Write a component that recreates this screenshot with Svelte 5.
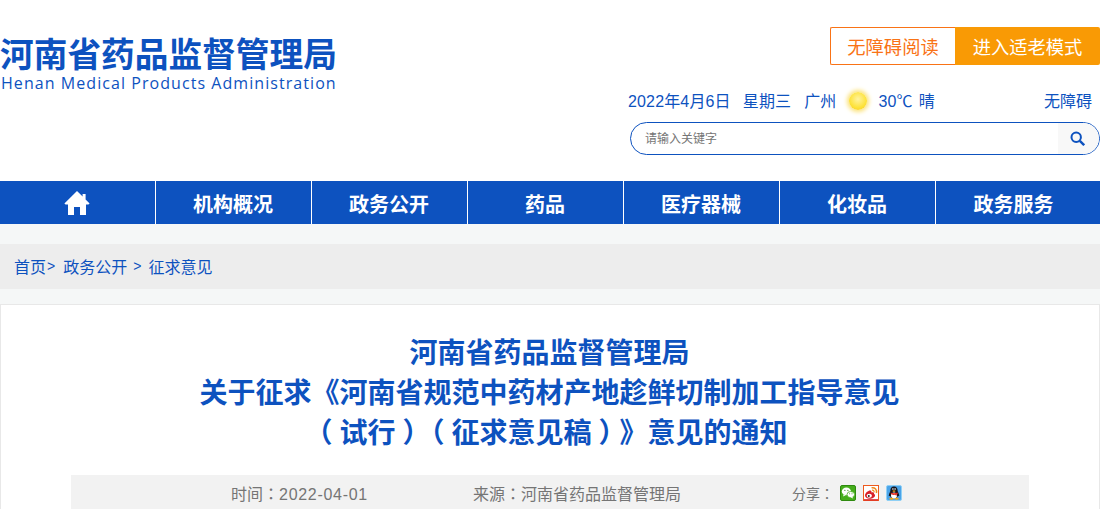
<script>
  const nav = ['机构概况', '政务公开', '药品', '医疗器械', '化妆品', '政务服务'];
</script>

<div class="page">
  <header class="header">
    <div class="logo">
      <div class="logo-cn">河南省药品监督管理局</div>
      <div class="logo-en">Henan Medical Products Administration</div>
    </div>
    <div class="tools">
      <div class="btns">
        <a class="btn-outline">无障碍阅读</a>
        <a class="btn-solid">进入适老模式</a>
      </div>
      <div class="info">
        <div class="date">
          <span>2022年4月6日</span>
          <span class="week">星期三</span>
          <span class="city">广州</span>
          <span class="sun"></span>
          <span class="temp">30℃</span>
          <span class="sky">晴</span>
        </div>
        <span class="access">无障碍</span>
      </div>
      <div class="search">
        <span class="placeholder">请输入关键字</span>
        <span class="search-btn">
          <svg width="15" height="15" viewBox="0 0 15 15" fill="none" stroke="#0d52bf">
            <circle cx="6.2" cy="6.2" r="4.7" stroke-width="2"/>
            <path d="M9.8 9.8L14.2 14.2" stroke-width="2.4"/>
          </svg>
        </span>
      </div>
    </div>
  </header>

  <nav class="nav">
    <a class="item">
      <svg width="26" height="24" viewBox="0 0 26 24" fill="#fff">
        <path d="M13 0L0.4 12.4L1.6 13.6H4V24H10V16H16V24H22V13.6H24.4L25.6 12.4L21.6 8.4V3H18.6V5.5Z"/>
      </svg>
    </a>
    {#each nav as n}
      <a class="item">{n}</a>
    {/each}
  </nav>

  <div class="crumb">
    <span>首页</span><span class="sep">&gt;</span><span class="c2">政务公开</span><span class="sep s2">&gt;</span><span>征求意见</span>
  </div>

  <main class="card">
    <h1 class="title">河南省药品监督管理局<br />关于征求《河南省规范中药材产地趁鲜切制加工指导意见<br /><span class="paren">（</span>试行<span class="paren">）</span><span class="paren">（</span>征求意见稿<span class="paren">）</span>》意见的通知</h1>
    <div class="meta">
      <span class="m-time">时间<span class="colon">：</span><span class="num">2022-04-01</span></span>
      <span class="m-src">来源<span class="colon">：</span>河南省药品监督管理局</span>
      <div class="share">
        <span class="share-label">分享<span class="colon">：</span></span>
        <svg class="ic" width="16" height="16" viewBox="0 0 16 16">
          <rect x="0.5" y="0.5" width="15" height="15" rx="1.5" fill="#45ad1b" stroke="#2f8a10"/>
          <ellipse cx="6.4" cy="6.4" rx="4.6" ry="3.8" fill="#fff"/>
          <path d="M3.6 9L3.2 11.4L6 9.9Z" fill="#fff"/>
          <circle cx="4.9" cy="5.3" r="0.6" fill="#2f8a10"/>
          <circle cx="7.9" cy="5.3" r="0.6" fill="#2f8a10"/>
          <ellipse cx="10.8" cy="9.6" rx="3.8" ry="3.1" fill="#fff" stroke="#45ad1b" stroke-width="0.8"/>
          <path d="M12.2 11.8L13.2 13.6L10.6 12.6Z" fill="#fff"/>
          <circle cx="9.6" cy="8.8" r="0.5" fill="#2f8a10"/>
          <circle cx="12" cy="8.8" r="0.5" fill="#2f8a10"/>
        </svg>
        <svg class="ic" width="16" height="16" viewBox="0 0 16 16">
          <rect x="0.5" y="0.5" width="15" height="15" fill="#fff" stroke="#ee5a1e"/>
          <rect x="1" y="14.2" width="14" height="1.3" fill="#d8202a"/>
          <path d="M2 10.6C2 8 5.4 5.4 7.4 5.6C8.6 5.8 8.6 7 8.4 7.6C10 7 11.4 7.6 11 9C12 9.4 12 10 12 10.6C12 12.4 9.4 13.8 6.8 13.8C4 13.8 2 12.6 2 10.6Z" fill="#d8202a"/>
          <ellipse cx="6.3" cy="10.7" rx="2.6" ry="2" fill="#fff"/>
          <circle cx="5.8" cy="10.9" r="1" fill="#222"/>
          <path d="M8.6 2.8C12 2.2 14.2 4.6 13.4 8" fill="none" stroke="#f08a1d" stroke-width="1.5"/>
          <path d="M9 5.2C10.4 5 11.4 6 11 7.4" fill="none" stroke="#f08a1d" stroke-width="1.2"/>
        </svg>
        <svg class="ic" width="16" height="16" viewBox="0 0 16 16">
          <rect x="0.5" y="0.5" width="15" height="15" rx="1.5" fill="#4aa3e8" stroke="#8fd0f5"/>
          <path d="M8 1.6C5.4 1.6 4.4 3.6 4.4 5.6C4.4 6.6 3.2 8.4 2.8 10.2C2.6 11.4 3.4 11.6 4 10.8C4.6 12.4 5.4 13 5.4 13H10.6C10.6 13 11.4 12.4 12 10.8C12.6 11.6 13.4 11.4 13.2 10.2C12.8 8.4 11.6 6.6 11.6 5.6C11.6 3.6 10.6 1.6 8 1.6Z" fill="#14141c"/>
          <ellipse cx="8" cy="10.4" rx="3" ry="3" fill="#fff"/>
          <path d="M4.4 7.6C6.5 8.6 9.5 8.6 11.6 7.6L11.8 9C10.8 9.4 10.6 9.5 10.4 11L9.2 9.8C8 10 6.8 9.9 5.6 9.6Z" fill="#e0281e"/>
          <path d="M6.2 6L8 5.2L9.8 6L8 7.1Z" fill="#f3a81c"/>
          <circle cx="6.9" cy="4" r="0.8" fill="#fff"/>
          <circle cx="9.1" cy="4" r="0.8" fill="#fff"/>
          <ellipse cx="5.4" cy="13.8" rx="2.2" ry="1" fill="#f3a81c"/>
          <ellipse cx="10.6" cy="13.8" rx="2.2" ry="1" fill="#f3a81c"/>
        </svg>
      </div>
    </div>
  </main>
</div>

<style>
  :global(body) {
    margin: 0;
    background: #f5f7f7;
    overflow: hidden;
  }
  .page {
    width: 1100px;
    height: 509px;
    overflow: hidden;
    font-family: "Liberation Sans", "Noto Sans CJK SC", sans-serif;
    color: #0d52bf;
  }
  .header {
    height: 181px;
    background: #fff;
    display: flex;
    justify-content: space-between;
    box-sizing: border-box;
  }
  .logo {
    padding-top: 37px;
  }
  .logo-cn {
    font-size: 33.7px;
    line-height: 37px;
    font-weight: 700;
    white-space: nowrap;
  }
  .logo-en {
    font-size: 16px;
    line-height: 18px;
    letter-spacing: 1.06px;
    padding-left: 1px;
    font-family: "Open Sans", sans-serif;
    white-space: nowrap;
  }
  .tools {
    width: 472px;
    padding-top: 27px;
    box-sizing: border-box;
    display: flex;
    flex-direction: column;
  }
  .btns {
    display: flex;
    justify-content: flex-end;
    height: 38px;
  }
  .btn-outline,
  .btn-solid {
    box-sizing: border-box;
    height: 38px;
    text-align: center;
    font-size: 18.3px;
  }
  .btn-outline {
    width: 125px;
    line-height: 39px;
    border: 1px solid #f97316;
    border-right: 0;
    border-radius: 2px 0 0 2px;
    color: #f97316;
  }
  .btn-solid {
    width: 145px;
    line-height: 41px;
    background: #f99a05;
    border-radius: 0 2px 2px 0;
    color: #fff;
  }
  .info {
    display: flex;
    justify-content: space-between;
    align-items: center;
    height: 24px;
    margin-top: 23px;
    font-size: 16px;
  }
  .date {
    display: flex;
    align-items: center;
    letter-spacing: 0.15px;
  }
  .week { margin-left: 12px; }
  .city { margin-left: 13px; }
  .sun {
    width: 18px;
    height: 18px;
    margin-left: 12px;
    margin-top: 2px;
    border-radius: 50%;
    background: radial-gradient(circle at 50% 40%, #fff3a0 0%, #fde23a 60%, #f8c61a 100%);
    box-shadow: 0 0 4px 2px #fbe27a;
  }
  .temp { margin-left: 12px; }
  .sky { margin-left: 6px; }
  .access {
    font-size: 16px;
    margin-right: 8px;
  }
  .search {
    margin-top: 10px;
    margin-left: 2px;
    height: 33px;
    box-sizing: border-box;
    border: 1px solid #0d52bf;
    border-radius: 17px;
    display: flex;
    justify-content: space-between;
    align-items: center;
    overflow: hidden;
  }
  .placeholder {
    font-size: 12px;
    color: #757575;
    padding-left: 14px;
    padding-bottom: 2px;
  }
  .search-btn {
    width: 41px;
    height: 100%;
    background: #f8f8f8;
    display: flex;
    align-items: center;
    justify-content: center;
    padding-right: 2px;
    box-sizing: border-box;
  }
  .nav {
    height: 43px;
    background: #0d52bf;
    display: grid;
    grid-template-columns: repeat(7, 156px);
  }
  .item {
    border-right: 1px solid #fff;
    color: #fff;
    font-size: 20px;
    font-weight: 700;
    display: flex;
    align-items: center;
    justify-content: center;
    box-sizing: border-box;
    padding-top: 1px;
    padding-right: 1px;
  }
  .item:first-child {
    padding-top: 1px;
    padding-right: 2px;
  }
  .item:last-child {
    border-right: 0;
    padding-right: 1px;
  }
  .crumb {
    margin-top: 20px;
    height: 45px;
    background: #ededed;
    padding-left: 14px;
    padding-bottom: 1px;
    box-sizing: border-box;
    display: flex;
    align-items: center;
    font-size: 16px;
  }
  .sep { font-size: 14px; margin-left: 1px; }
  .c2 { margin-left: 8px; }
  .s2 { margin: 0 7px 0 6px; }
  .card {
    margin-top: 15px;
    height: 300px;
    box-sizing: border-box;
    background: #fff;
    border: 1px solid #e8e8e8;
    padding: 29px 71px 0 70px;
  }
  .title {
    margin: 0;
    font-size: 28px;
    line-height: 40px;
    font-weight: 700;
    text-align: center;
    color: #0d52bf;
    white-space: nowrap;
    text-spacing-trim: space-all;
  }
  .paren {
    display: inline-block;
    width: 1em;
    text-align: center;
    font-feature-settings: "halt";
  }
  .meta {
    margin-top: 21px;
    margin-right: -1px;
    height: 40px;
    background: #f2f2f2;
    color: #757575;
    font-size: 16px;
    display: grid;
    grid-template-columns: 402px 319px 1fr;
    align-items: start;
    line-height: 36px;
  }
  .m-time { padding-left: 160px; }
  .colon {
    font-family: "Noto Sans CJK TC", sans-serif;
  }
  .num { letter-spacing: 0.7px; }
  .share {
    display: flex;
    align-items: center;
    height: 36px;
    font-size: 14px;
  }
  .share-label { margin-right: 6px; }
  .ic { margin-right: 7px; }
</style>
